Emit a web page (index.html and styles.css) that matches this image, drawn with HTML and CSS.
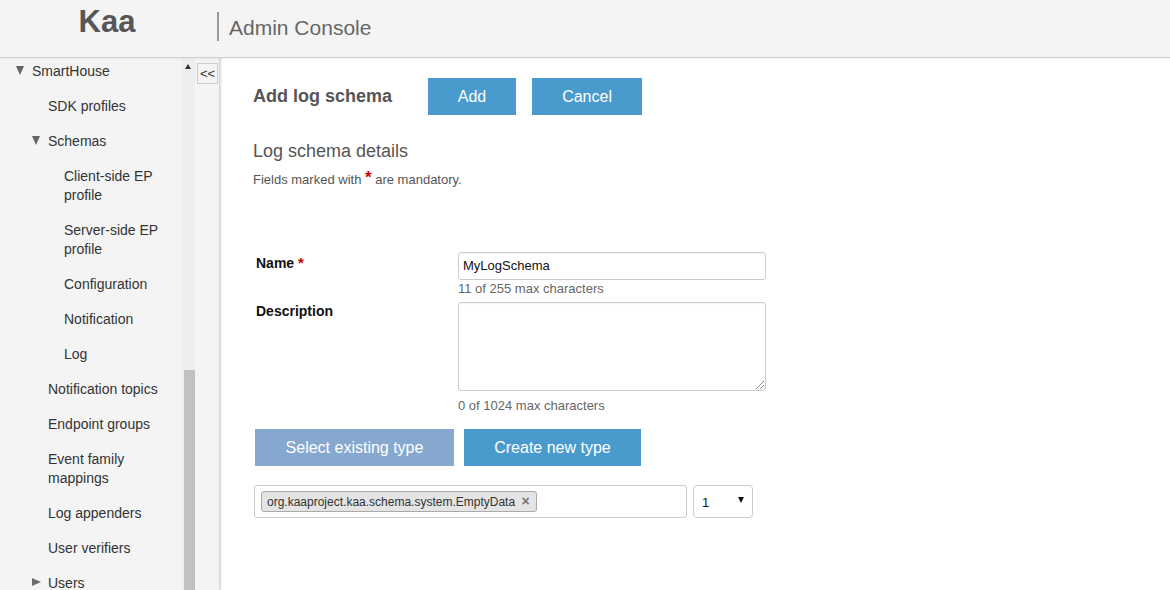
FILE: index.html
```html
<!DOCTYPE html>
<html>
<head>
<meta charset="utf-8">
<title>Kaa Admin Console</title>
<link rel="stylesheet" href="styles.css">
</head>
<body>
<header class="topbar">
  <div class="logo">Kaa</div>
  <div class="console">Admin Console</div>
</header>
<div class="layout">
  <nav class="sidebar">
    <ul class="tree">
      <li class="item lvl0 open"><span class="tri down"></span>SmartHouse</li>
      <li class="item lvl1">SDK profiles</li>
      <li class="item lvl1 open"><span class="tri down"></span>Schemas</li>
      <li class="item lvl2">Client-side EP profile</li>
      <li class="item lvl2">Server-side EP profile</li>
      <li class="item lvl2">Configuration</li>
      <li class="item lvl2">Notification</li>
      <li class="item lvl2">Log</li>
      <li class="item lvl1">Notification topics</li>
      <li class="item lvl1">Endpoint groups</li>
      <li class="item lvl1">Event family mappings</li>
      <li class="item lvl1">Log appenders</li>
      <li class="item lvl1">User verifiers</li>
      <li class="item lvl1b"><span class="tri right"></span>Users</li>
    </ul>
  </nav>
  <div class="scrolltrack">
    <span class="scrollup"></span>
    <div class="thumb"></div>
  </div>
  <div class="collapse">
    <button class="collapse-btn">&lt;&lt;</button>
  </div>
  <main class="main">
    <div class="titlebar">
      <h1 class="title">Add log schema</h1>
      <button class="btn add">Add</button>
      <button class="btn cancel">Cancel</button>
    </div>
    <h2 class="subtitle">Log schema details</h2>
    <p class="hint">Fields marked with <span class="req">*</span> are mandatory.</p>

    <div class="form">
      <div class="row">
        <label class="label">Name <span class="req-s">*</span></label>
        <div class="field">
          <div class="input">MyLogSchema</div>
          <div class="counter">11 of 255 max characters</div>
        </div>
      </div>
      <div class="row">
        <label class="label desc">Description</label>
        <div class="field">
          <div class="textarea"><span class="grip"></span></div>
          <div class="counter">0 of 1024 max characters</div>
        </div>
      </div>
    </div>

    <div class="typebtns">
      <button class="btn wide select">Select existing type</button>
      <button class="btn wide create">Create new type</button>
    </div>

    <div class="typerow">
      <div class="multi">
        <span class="chip">org.kaaproject.kaa.schema.system.EmptyData <span class="x">×</span></span>
      </div>
      <div class="version"><span>1</span><span class="caret"></span></div>
    </div>
  </main>
</div>
</body>
</html>
```
FILE: styles.css
```css
* { box-sizing: border-box; }
html, body { margin: 0; padding: 0; }
body {
  width: 1170px;
  height: 590px;
  overflow: hidden;
  font-family: "Liberation Sans", Arial, sans-serif;
  background: #fff;
  color: #333;
}
.topbar {
  height: 58px;
  background: #f4f4f4;
  border-bottom: 1px solid #cfcfcf;
  display: flex;
  align-items: flex-start;
  box-shadow: 0 1px 2px rgba(0,0,0,0.06);
  position: relative;
  z-index: 2;
}
.logo {
  width: 214px;
  text-align: center;
  font-size: 31px;
  font-weight: bold;
  color: #575757;
  line-height: 36px;
  padding-top: 4px;
}
.console {
  margin-top: 12px;
  height: 29px;
  border-left: 2px solid #9a9a9a;
  margin-left: 3px;
  padding-left: 10px;
  font-size: 21px;
  color: #666;
  line-height: 29px;
  padding-top: 1px;
}
.layout {
  display: flex;
  height: 532px;
}
.sidebar {
  width: 182px;
  background: #f4f4f4;
  overflow: hidden;
}
.tree {
  list-style: none;
  margin: -4.5px 0 0 0;
  padding: 0;
}
.item {
  font-size: 14px;
  line-height: 19px;
  padding-top: 8px;
  padding-bottom: 8px;
  padding-right: 8px;
  color: #333;
  position: relative;
}
.lvl0 { padding-left: 32px; }
.lvl1 { padding-left: 48px; }
.lvl1b { padding-left: 48px; }
.lvl2 { padding-left: 64px; }
.tri {
  position: absolute;
  width: 0; height: 0;
}
.tri.down {
  border-left: 4.5px solid transparent;
  border-right: 4.5px solid transparent;
  border-top: 9px solid #666;
  top: 12px;
}
.lvl0 .tri.down { left: 16px; }
.lvl1 .tri.down { left: 32px; }
.tri.right {
  border-top: 4.5px solid transparent;
  border-bottom: 4.5px solid transparent;
  border-left: 9px solid #6d6d6d;
  top: 12px;
  left: 32px;
}
.scrolltrack {
  width: 13px;
  background: #eeeeee;
  position: relative;
  display: flex;
  flex-direction: column;
}
.scrollup {
  position: absolute;
  left: 3px;
  top: 6px;
  width: 0; height: 0;
  border-left: 3.5px solid transparent;
  border-right: 3.5px solid transparent;
  border-bottom: 5px solid #333;
}
.thumb {
  margin-top: 312px;
  margin-left: 2px;
  flex: 1;
  background: #c1c1c1;
}
.collapse {
  width: 25px;
  background: #f4f4f4;
  border-right: 1px solid #d6d6d6;
  box-shadow: 1px 0 2px rgba(0,0,0,0.15);
  padding-top: 5px;
  padding-left: 2px;
  position: relative;
  z-index: 1;
}
.collapse-btn {
  display: block;
  width: 21px;
  height: 21px;
  padding: 0;
  border: 1px solid #ccc;
  background: #f4f4f4;
  font-family: "Liberation Sans", Arial, sans-serif;
  font-size: 13px;
  color: #333;
  line-height: 18px;
  text-align: center;
}
.main {
  flex: 1;
  padding: 20px 0 0 33px;
  background: #fff;
}
.titlebar {
  display: flex;
  align-items: center;
  height: 37px;
}
.title {
  margin: 0 36px 0 0;
  font-size: 18px;
  font-weight: bold;
  color: #555;
}
.btn {
  height: 37px;
  border: none;
  background: #4a9bcd;
  color: #fff;
  font-family: "Liberation Sans", Arial, sans-serif;
  font-size: 16px;
  padding: 0;
  margin-right: 16px;
}
.btn.add { width: 88px; }
.btn.cancel { width: 110px; }
.subtitle {
  margin: 25px 0 0 0;
  font-size: 18px;
  font-weight: normal;
  color: #555;
  line-height: 22px;
}
.hint {
  margin: 10px 0 0 0;
  font-size: 13px;
  color: #555;
  line-height: 15px;
}
.req {
  color: #c00;
  font-weight: bold;
  font-size: 17px;
  vertical-align: 1px;
  line-height: 10px;
}
.form {
  margin-top: 65px;
  padding-left: 3px;
}
.row {
  display: flex;
  margin-bottom: 6px;
}
.label {
  width: 202px;
  font-size: 14px;
  font-weight: bold;
  color: #111;
  padding-top: 3px;
  line-height: 16px;
}
.label.desc { padding-top: 1px; }
.req-s {
  color: #c00;
  font-size: 15px;
}
.field {
  width: 308px;
}
.input {
  height: 28px;
  border: 1px solid #ccc;
  border-radius: 3px;
  font-size: 13px;
  color: #111;
  line-height: 26px;
  padding-left: 4px;
  box-shadow: inset 0 1px 1px rgba(0,0,0,0.05);
}
.textarea {
  height: 89px;
  border: 1px solid #ccc;
  border-radius: 3px;
  position: relative;
  box-shadow: inset 0 1px 1px rgba(0,0,0,0.05);
}
.grip {
  position: absolute;
  right: 1px;
  bottom: 1px;
  width: 8px;
  height: 8px;
  background: linear-gradient(135deg, transparent 45%, #888 45%, #888 52%, transparent 52%, transparent 72%, #888 72%, #888 79%, transparent 79%);
}
.counter {
  font-size: 13px;
  color: #666;
  line-height: 15px;
  margin-top: 1px;
}
.row + .row .counter { margin-top: 7px; }
.typebtns {
  display: flex;
  margin-top: 16px;
  padding-left: 2px;
}
.btn.wide {
  margin-right: 10px;
  padding: 0;
}
.btn.select { width: 199px; background: #86a8cf; }
.btn.create { width: 177px; }
.typerow {
  display: flex;
  margin-top: 19px;
  padding-left: 1px;
}
.multi {
  width: 433px;
  height: 33px;
  border: 1px solid #ccc;
  border-radius: 3px;
  padding: 5px 0 0 6px;
  margin-right: 6px;
}
.chip {
  display: inline-block;
  height: 21px;
  background: #e4e4e4;
  border: 1px solid #aaa;
  border-radius: 3px;
  font-size: 12px;
  color: #333;
  line-height: 19px;
  padding: 0 6px 0 5px;
}
.x {
  color: #777;
  font-weight: bold;
  font-size: 14px;
  margin-left: 3px;
}
.version {
  width: 60px;
  height: 33px;
  border: 1px solid #ccc;
  border-radius: 4px;
  display: flex;
  align-items: center;
  justify-content: space-between;
  padding: 2px 8px 0 8px;
  font-size: 13px;
  color: #111;
}
.caret {
  width: 0; height: 0;
  border-left: 3.5px solid transparent;
  border-right: 3.5px solid transparent;
  border-top: 6px solid #111;
  margin-top: -6px;
}
```
